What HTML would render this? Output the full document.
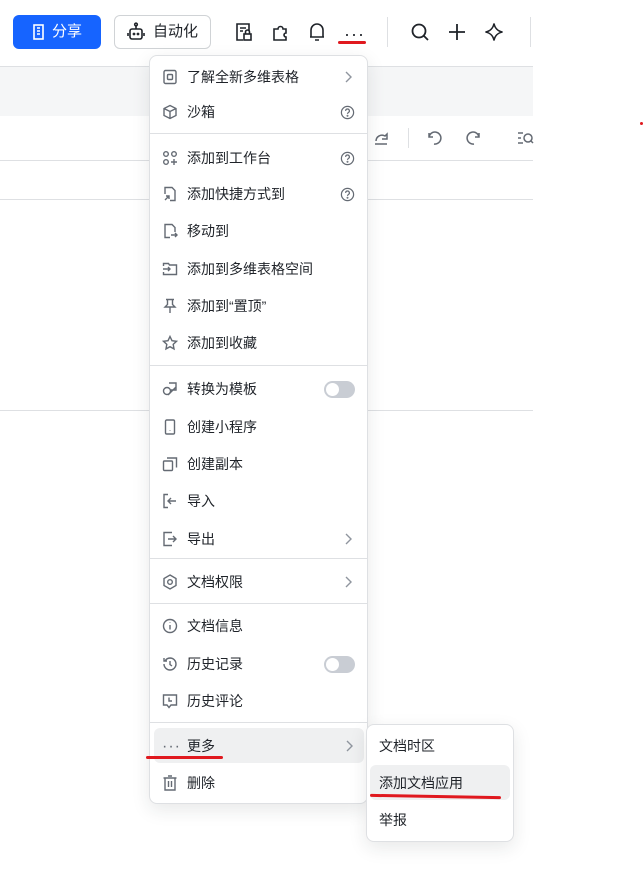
<!DOCTYPE html>
<html><head><meta charset="utf-8"><style>
*{margin:0;padding:0;box-sizing:border-box}
body{width:644px;height:883px;background:#fff;position:relative;overflow:hidden;font-family:"Liberation Sans","Noto Sans CJK SC",sans-serif;color:#1f2329}
.a{position:absolute}
.hl{position:absolute;left:0;width:533px;height:1px;background:#dee0e3}
.menu{position:absolute;left:149px;top:55px;width:219px;height:749px;background:#fff;border:1px solid #dee0e3;border-radius:8px;box-shadow:0 6px 18px rgba(31,35,41,.1)}
.it{position:absolute;left:0;width:217px;height:36px;font-size:14px;line-height:36px}
.it span{position:absolute;left:37px}
.it svg.ic{position:absolute;left:12px;top:10px}
.it .r{position:absolute;right:12px;top:11px}
.dv{position:absolute;left:0;width:217px;height:1px;background:#dee0e3}
.tg{position:absolute;right:12px;top:10px;width:31px;height:17px;border-radius:9px;background:#c9cdd4}
.tg:after{content:"";position:absolute;left:2px;top:2px;width:13px;height:13px;border-radius:50%;background:#fff}
.sub{position:absolute;left:366px;top:724px;width:148px;height:118px;background:#fff;border:1px solid #dee0e3;border-radius:8px;box-shadow:0 6px 18px rgba(31,35,41,.1)}
.red{position:absolute;height:3px;background:#e0191f;border-radius:2px}
</style></head><body>
<div class="a" style="left:0;top:67px;width:533px;height:49px;background:#f5f6f7"></div>
<div class="hl" style="top:66px"></div>
<div class="hl" style="top:160px"></div>
<div class="hl" style="top:199px"></div>
<div class="hl" style="top:410px"></div>
<div class="a" style="left:387px;top:17px;width:1px;height:30px;background:#dee0e3"></div>
<div class="a" style="left:530px;top:17px;width:1px;height:30px;background:#dee0e3"></div>
<div class="a" style="left:640px;top:122px;width:3px;height:3px;border-radius:50%;background:#e0191f"></div>

<div class="a" style="left:13px;top:15px;width:88px;height:34px;background:#1664ff;border-radius:6px;color:#fff;font-size:15px;line-height:34px">
<svg class="a" style="left:19px;top:9px" width="14" height="16" viewBox="0 0 14 16" fill="none" stroke="#fff" stroke-width="1.6"><rect x="2" y="1" width="9" height="14"/><path d="M5 4h3M5 7h3M5 10h3"/></svg>
<span class="a" style="left:39px">分享</span></div>
<div class="a" style="left:114px;top:15px;width:97px;height:34px;border:1px solid #d0d3d6;border-radius:6px;font-size:15px;line-height:32px">
<svg class="a" style="left:11px;top:6px" width="20" height="20" viewBox="0 0 20 20" fill="none" stroke="#1f2329" stroke-width="1.6"><circle cx="10" cy="2.5" r="1.3"/><path d="M10 4v3"/><rect x="4" y="7" width="12" height="10" rx="2"/><path d="M2 11v3M18 11v3"/><circle cx="8" cy="12" r=".6"/><circle cx="12" cy="12" r=".6"/></svg>
<span class="a" style="left:38px">自动化</span></div>
<svg class="a" style="left:234px;top:22px" width="20" height="20" viewBox="0 0 20 20" fill="none" stroke="#1f2329" stroke-width="1.6"><path d="M15 9V2H3v16h6"/><path d="M6 6h6M6 9h3"/><rect x="10" y="12" width="7" height="6"/><path d="M11.5 12v-2a2 2 0 014 0v2"/></svg>
<svg class="a" style="left:271px;top:22px" width="20" height="20" viewBox="0 0 20 20" fill="none" stroke="#1f2329" stroke-width="1.6"><path d="M3 18V7h4a2.5 2.5 0 015 0h3v4a2 2 0 000 4v3z"/></svg>
<svg class="a" style="left:307px;top:21px" width="20" height="22" viewBox="0 0 20 22" fill="none" stroke="#1f2329" stroke-width="1.6"><path d="M4 16V9a6 6 0 0112 0v7H3h14M8 19h4"/></svg>
<div class="a" style="left:344px;top:24px;font-size:18px;letter-spacing:1px">···</div>
<div class="red" style="left:338px;top:41px;width:28px"></div>
<svg class="a" style="left:410px;top:22px" width="20" height="20" viewBox="0 0 20 20" fill="none" stroke="#1f2329" stroke-width="1.8"><circle cx="9" cy="9" r="6.5"/><path d="M14 14l4 4"/></svg>
<svg class="a" style="left:447px;top:22px" width="20" height="20" viewBox="0 0 20 20" fill="none" stroke="#1f2329" stroke-width="1.8"><path d="M10 2v16M2 10h16"/></svg>
<svg class="a" style="left:484px;top:22px" width="20" height="20" viewBox="0 0 20 20" fill="none" stroke="#1f2329" stroke-width="1.6"><path d="M10 1.5C10.8 6 14 9.2 18.5 10 14 10.8 10.8 14 10 18.5 9.2 14 6 10.8 1.5 10 6 9.2 9.2 6 10 1.5z"/></svg>
<svg class="a" style="left:372px;top:129px" width="18" height="18" viewBox="0 0 18 18" fill="none" stroke="#646a73" stroke-width="1.5"><path d="M3 15h12M4 12a6 6 0 019-5l2-2v5h-5"/></svg>
<div class="a" style="left:408px;top:128px;width:1px;height:20px;background:#dee0e3"></div>
<svg class="a" style="left:425px;top:129px" width="18" height="18" viewBox="0 0 18 18" fill="none" stroke="#646a73" stroke-width="1.5"><path d="M4 4v4h4M4 8a6 6 0 115 7"/></svg>
<svg class="a" style="left:465px;top:129px" width="18" height="18" viewBox="0 0 18 18" fill="none" stroke="#646a73" stroke-width="1.5"><path d="M14 4v4h-4M14 8a6 6 0 10-5 7"/></svg>
<svg class="a" style="left:516px;top:129px" width="18" height="18" viewBox="0 0 18 18" fill="none" stroke="#646a73" stroke-width="1.5"><path d="M2 4h5M2 9h3M2 14h5"/><circle cx="12" cy="9" r="4"/><path d="M15 12l2 2"/></svg>

<div class="menu">
<div class="it" style="top:3px"><svg class="ic" width="16" height="16" viewBox="0 0 16 16" fill="none" stroke="#646a73" stroke-width="1.4"><rect x="2" y="1.5" width="12" height="13" rx="1.5"/><rect x="5.5" y="5.5" width="5" height="5" rx="1"/></svg><span>了解全新多维表格</span><svg class="r" width="14" height="14" viewBox="0 0 14 14" fill="none" stroke="#8f959e" stroke-width="1.4"><path d="M5 2l5 5-5 5"/></svg></div>
<div class="it" style="top:38px"><svg class="ic" width="16" height="16" viewBox="0 0 16 16" fill="none" stroke="#646a73" stroke-width="1.4"><path d="M8 1.5l6 3v7l-6 3-6-3v-7zM2 4.5l6 3 6-3M8 7.5v7"/></svg><span>沙箱</span><svg class="r" width="15" height="15" viewBox="0 0 16 16" fill="none" stroke="#646a73" stroke-width="1.3"><circle cx="8" cy="8" r="6.5"/><path d="M6 6.3a2 2 0 113 1.7c-.7.4-1 .8-1 1.5"/><circle cx="8" cy="11.5" r=".4"/></svg></div>
<div class="dv" style="top:77px"></div>
<div class="it" style="top:84px"><svg class="ic" width="16" height="16" viewBox="0 0 16 16" fill="none" stroke="#646a73" stroke-width="1.4"><circle cx="4" cy="4" r="2.3"/><circle cx="12" cy="4" r="2.3"/><circle cx="4" cy="12" r="2.3"/><path d="M12 9v6M9 12h6"/></svg><span>添加到工作台</span><svg class="r" width="15" height="15" viewBox="0 0 16 16" fill="none" stroke="#646a73" stroke-width="1.3"><circle cx="8" cy="8" r="6.5"/><path d="M6 6.3a2 2 0 113 1.7c-.7.4-1 .8-1 1.5"/><circle cx="8" cy="11.5" r=".4"/></svg></div>
<div class="it" style="top:120px"><svg class="ic" width="16" height="16" viewBox="0 0 16 16" fill="none" stroke="#646a73" stroke-width="1.4"><path d="M3 8V1.5h7l3 3V14.5H8"/><path d="M3 14l4-4M4 10h3v3"/></svg><span>添加快捷方式到</span><svg class="r" width="15" height="15" viewBox="0 0 16 16" fill="none" stroke="#646a73" stroke-width="1.3"><circle cx="8" cy="8" r="6.5"/><path d="M6 6.3a2 2 0 113 1.7c-.7.4-1 .8-1 1.5"/><circle cx="8" cy="11.5" r=".4"/></svg></div>
<div class="it" style="top:157px"><svg class="ic" width="16" height="16" viewBox="0 0 16 16" fill="none" stroke="#646a73" stroke-width="1.4"><path d="M13 9V4.5l-3-3H3v13h5"/><path d="M9 12h6M13 10l2 2-2 2"/></svg><span>移动到</span></div>
<div class="it" style="top:195px"><svg class="ic" width="16" height="16" viewBox="0 0 16 16" fill="none" stroke="#646a73" stroke-width="1.4"><path d="M1.5 5V2.5h5l1 1.5h7v9.5h-13V11"/><path d="M1 8h7M6 6l2 2-2 2"/></svg><span>添加到多维表格空间</span></div>
<div class="it" style="top:232px"><svg class="ic" width="16" height="16" viewBox="0 0 16 16" fill="none" stroke="#646a73" stroke-width="1.4"><path d="M4 1.5h8M5.5 1.5v5L3 9h10l-2.5-2.5v-5M8 9v6"/></svg><span>添加到“置顶”</span></div>
<div class="it" style="top:269px"><svg class="ic" width="16" height="16" viewBox="0 0 16 16" fill="none" stroke="#646a73" stroke-width="1.4"><path d="M8 1.5l2 4.2 4.5.6-3.3 3.1.8 4.5L8 11.7l-4 2.2.8-4.5L1.5 6.3 6 5.7z"/></svg><span>添加到收藏</span></div>
<div class="dv" style="top:309px"></div>
<div class="it" style="top:315px"><svg class="ic" width="16" height="16" viewBox="0 0 16 16" fill="none" stroke="#646a73" stroke-width="1.4"><circle cx="5" cy="10" r="3.5"/><path d="M7 2h7v7H9M6 14l8-8"/></svg><span>转换为模板</span><div class="tg"></div></div>
<div class="it" style="top:353px"><svg class="ic" width="16" height="16" viewBox="0 0 16 16" fill="none" stroke="#646a73" stroke-width="1.4"><rect x="3.5" y="1" width="9" height="14" rx="1.3"/><path d="M8 11.5v.5"/></svg><span>创建小程序</span></div>
<div class="it" style="top:390px"><svg class="ic" width="16" height="16" viewBox="0 0 16 16" fill="none" stroke="#646a73" stroke-width="1.4"><rect x="1.5" y="5" width="9" height="9.5" rx="1"/><path d="M5 2h9.5v9.5"/></svg><span>创建副本</span></div>
<div class="it" style="top:427px"><svg class="ic" width="16" height="16" viewBox="0 0 16 16" fill="none" stroke="#646a73" stroke-width="1.4"><path d="M6 1.5H2v13h4M14 8H6M9 5L6 8l3 3"/></svg><span>导入</span></div>
<div class="it" style="top:465px"><svg class="ic" width="16" height="16" viewBox="0 0 16 16" fill="none" stroke="#646a73" stroke-width="1.4"><path d="M10 1.5H2v13h8M6 8h8M11 5l3 3-3 3"/></svg><span>导出</span><svg class="r" width="14" height="14" viewBox="0 0 14 14" fill="none" stroke="#8f959e" stroke-width="1.4"><path d="M5 2l5 5-5 5"/></svg></div>
<div class="dv" style="top:502px"></div>
<div class="it" style="top:508px"><svg class="ic" width="16" height="16" viewBox="0 0 16 16" fill="none" stroke="#646a73" stroke-width="1.4"><path d="M8 1l6 3.5v7L8 15l-6-3.5v-7z"/><circle cx="8" cy="8" r="2.3"/></svg><span>文档权限</span><svg class="r" width="14" height="14" viewBox="0 0 14 14" fill="none" stroke="#8f959e" stroke-width="1.4"><path d="M5 2l5 5-5 5"/></svg></div>
<div class="dv" style="top:547px"></div>
<div class="it" style="top:552px"><svg class="ic" width="16" height="16" viewBox="0 0 16 16" fill="none" stroke="#646a73" stroke-width="1.4"><circle cx="8" cy="8" r="6.5"/><path d="M8 7v4.5M8 4.5v.5"/></svg><span>文档信息</span></div>
<div class="it" style="top:590px"><svg class="ic" width="16" height="16" viewBox="0 0 16 16" fill="none" stroke="#646a73" stroke-width="1.4"><path d="M2 8a6 6 0 106-6 6 6 0 00-5 3M2 2v3h3M8 5v3.5l2 1.5"/></svg><span>历史记录</span><div class="tg"></div></div>
<div class="it" style="top:627px"><svg class="ic" width="16" height="16" viewBox="0 0 16 16" fill="none" stroke="#646a73" stroke-width="1.4"><path d="M1.5 2h13v10H9l-2 2.5L5 12H1.5z"/><path d="M7 4.5v3.5h3"/></svg><span>历史评论</span></div>
<div class="dv" style="top:666px"></div>
<div class="it" style="top:672px;left:4px;width:210px;height:35px;background:#eff0f1;border-radius:6px"><span style="left:8px;top:1px;font-size:16px;color:#646a73;letter-spacing:1px">···</span><span style="left:33px">更多</span><svg class="r" style="right:8px" width="14" height="14" viewBox="0 0 14 14" fill="none" stroke="#8f959e" stroke-width="1.4"><path d="M5 2l5 5-5 5"/></svg></div>
<div class="it" style="top:709px"><svg class="ic" width="16" height="16" viewBox="0 0 16 16" fill="none" stroke="#646a73" stroke-width="1.4"><path d="M1.5 3h13M6 1h4M3 3v12h10V3M6.5 6v6M9.5 6v6"/></svg><span>删除</span></div>
</div>
<div class="sub">
<div class="a" style="left:12px;top:8px;font-size:14px;line-height:26px">文档时区</div>
<div class="a" style="left:3px;top:40px;width:140px;height:35px;background:#eff0f1;border-radius:6px"></div>
<div class="a" style="left:12px;top:45px;font-size:14px;line-height:26px">添加文档应用</div>
<div class="a" style="left:12px;top:82px;font-size:14px;line-height:26px">举报</div>
</div>
<div class="red" style="left:146px;top:756px;width:77px"></div>
<div class="red" style="left:370px;top:795px;width:131px;transform:rotate(1deg)"></div>
</body></html>
